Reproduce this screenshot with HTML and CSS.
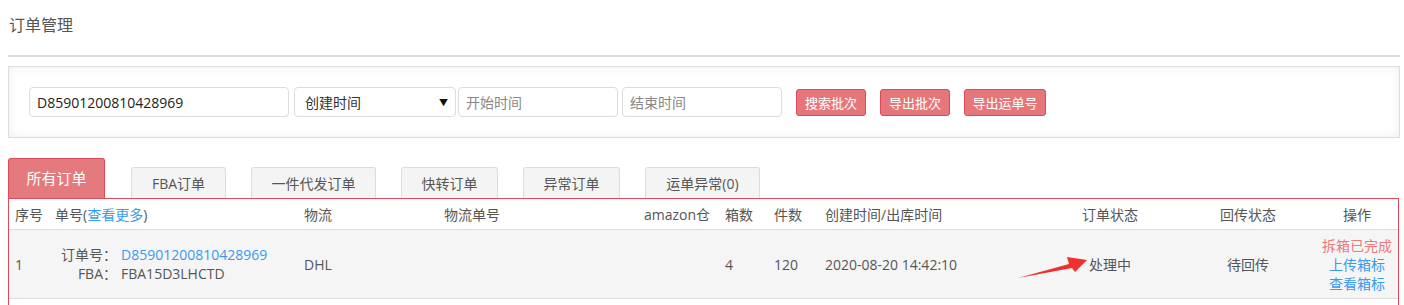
FILE: index.html
```html
<!DOCTYPE html>
<html lang="zh-CN">

<head>
    <meta charset="UTF-8">
    <title>订单管理</title>
    <link rel="stylesheet" href="styles.css">
</head>

<body>
    <div class="page">
        <div class="page-title">订单管理</div>

        <div class="search-panel">
            <input type="text" class="field field-order" value="D85901200810428969">
            <div class="field field-select">
                <span>创建时间</span>
                <span class="caret">&#9660;</span>
            </div>
            <input type="text" class="field field-date" placeholder="开始时间">
            <input type="text" class="field field-date" placeholder="结束时间">
            <button class="btn">搜索批次</button>
            <button class="btn">导出批次</button>
            <button class="btn btn-wide">导出运单号</button>
        </div>

        <div class="tabs">
            <div class="tab active">所有订单</div>
            <div class="tab w95">FBA订单</div>
            <div class="tab w125">一件代发订单</div>
            <div class="tab w97">快转订单</div>
            <div class="tab w97">异常订单</div>
            <div class="tab w115">运单异常(0)</div>
        </div>

        <div class="table-wrap">
            <table class="orders">
                <colgroup>
                    <col style="width: 39px">
                    <col style="width: 250px">
                    <col style="width: 140px">
                    <col style="width: 200px">
                    <col style="width: 81px">
                    <col style="width: 49px">
                    <col style="width: 51px">
                    <col style="width: 221px">
                    <col style="width: 140px">
                    <col style="width: 136px">
                    <col style="width: 82px">
                </colgroup>
                <thead>
                    <tr>
                        <th>序号</th>
                        <th>单号(<a href="#">查看更多</a>)</th>
                        <th>物流</th>
                        <th>物流单号</th>
                        <th>amazon仓</th>
                        <th>箱数</th>
                        <th>件数</th>
                        <th>创建时间/出库时间</th>
                        <th class="center">订单状态</th>
                        <th class="center">回传状态</th>
                        <th class="center">操作</th>
                    </tr>
                </thead>
                <tbody>
                    <tr>
                        <td>1</td>
                        <td>
                            <div class="order-no">
                                <span class="label">订单号：</span>
                                <a href="#">D85901200810428969</a>
                                <span class="label">FBA：</span>
                                <span>FBA15D3LHCTD</span>
                            </div>
                        </td>
                        <td>DHL</td>
                        <td></td>
                        <td></td>
                        <td>4</td>
                        <td>120</td>
                        <td>2020-08-20 14:42:10</td>
                        <td class="center">处理中</td>
                        <td class="center">待回传</td>
                        <td class="center ops">
                            <span class="done">拆箱已完成</span>
                            <a href="#">上传箱标</a>
                            <a href="#">查看箱标</a>
                        </td>
                    </tr>
                </tbody>
            </table>
        </div>

        <svg class="arrow" width="80" height="30" viewBox="1012 252 80 30">
            <polygon points="1018,278 1069,264 1067,257 1087,260 1075,272 1072,268" fill="#f0302c" />
        </svg>
    </div>
</body>

</html>
```

FILE: styles.css
```css
body {
    margin: 0;
    padding: 0;
    font-family: "Open Sans", "Noto Sans CJK SC", sans-serif;
    font-size: 14px;
    color: #555;
    background-color: #fff;
}

a {
    color: #3a9af0;
    text-decoration: none;
}

.page {
    position: relative;
    margin: 0 4px 0 8px;
}

.page-title {
    height: 57px;
    padding-left: 1px;
    line-height: 51px;
    font-size: 16px;
    color: #555;
    border-bottom: 2px solid #ddd;
    box-sizing: border-box;
}

.search-panel {
    display: flex;
    align-items: center;
    margin-top: 9px;
    height: 72px;
    padding: 0 20px;
    border: 1px solid #ddd;
    box-shadow: inset 0 0 10px rgba(0, 0, 0, 0.07);
    box-sizing: border-box;
}

.field {
    height: 30px;
    margin: 0;
    padding: 0 7px;
    border: 1px solid #ddd;
    border-radius: 4px;
    font-family: inherit;
    font-size: 14px;
    color: #222;
    background-color: #fff;
    box-sizing: border-box;
    outline: none;
}

.field::placeholder {
    color: #888;
}

.field-order {
    width: 260px;
    margin-right: 5px;
}

.field-select {
    display: flex;
    align-items: center;
    justify-content: space-between;
    width: 162px;
    margin-right: 2px;
    padding: 0 7px 0 10px;
    color: #333;
}

.caret {
    font-size: 9px;
    color: #111;
}

.field-date {
    width: 160px;
    margin-right: 4px;
}

.field-date+.field-date {
    margin-right: 14px;
}

.btn {
    height: 27px;
    width: 70px;
    margin-right: 14px;
    padding: 0;
    border: 1px solid #dc4a5c;
    border-radius: 3px;
    background-color: #e5777b;
    color: #fff;
    font-family: inherit;
    font-size: 13px;
    cursor: pointer;
}

.btn-wide {
    width: 82px;
}

.tabs {
    display: flex;
    align-items: flex-end;
    margin-top: 20px;
}

.tab {
    height: 31px;
    margin-left: 25px;
    border: 1px solid #ddd;
    border-bottom: none;
    border-radius: 3px 3px 0 0;
    background-color: #f4f4f4;
    line-height: 31px;
    text-align: center;
    color: #555;
    box-sizing: border-box;
}

.tab.active {
    width: 97px;
    height: 40px;
    margin-left: 0;
    margin-right: 1px;
    border-color: #dc4a5c;
    background-color: #e57a7e;
    color: #fff;
    font-size: 15px;
    line-height: 38px;
}

.w95 {
    width: 95px;
}

.w97 {
    width: 97px;
}

.w115 {
    width: 115px;
}

.w125 {
    width: 125px;
}

.table-wrap {
    border: 1px solid #dc4a5c;
    border-bottom: none;
    width: 1391px;
    box-sizing: border-box;
    min-height: 120px;
}

.orders {
    width: 100%;
    table-layout: fixed;
    border-collapse: collapse;
}

.orders th,
.orders td {
    padding: 0 0 0 6px;
    text-align: left;
    font-weight: normal;
    white-space: nowrap;
    color: #555;
}

.orders th {
    height: 30px;
    border-bottom: 1px solid #ddd;
}

.orders td {
    height: 68px;
    background-color: #f5f5f5;
    border-bottom: 1px solid #ddd;
}

.orders th:nth-child(2),
.orders td:nth-child(2) {
    padding-left: 7px;
}

.orders .center {
    text-align: center;
    padding-left: 0;
}

.order-no {
    display: grid;
    grid-template-columns: 62px auto;
    column-gap: 4px;
    line-height: 19px;
}

.order-no .label {
    text-align: right;
}

.ops {
    line-height: 19px;
}

.ops span,
.ops a {
    display: block;
}

.ops .done {
    color: #e8797c;
}

.arrow {
    position: absolute;
    left: 1004px;
    top: 252px;
}
```
